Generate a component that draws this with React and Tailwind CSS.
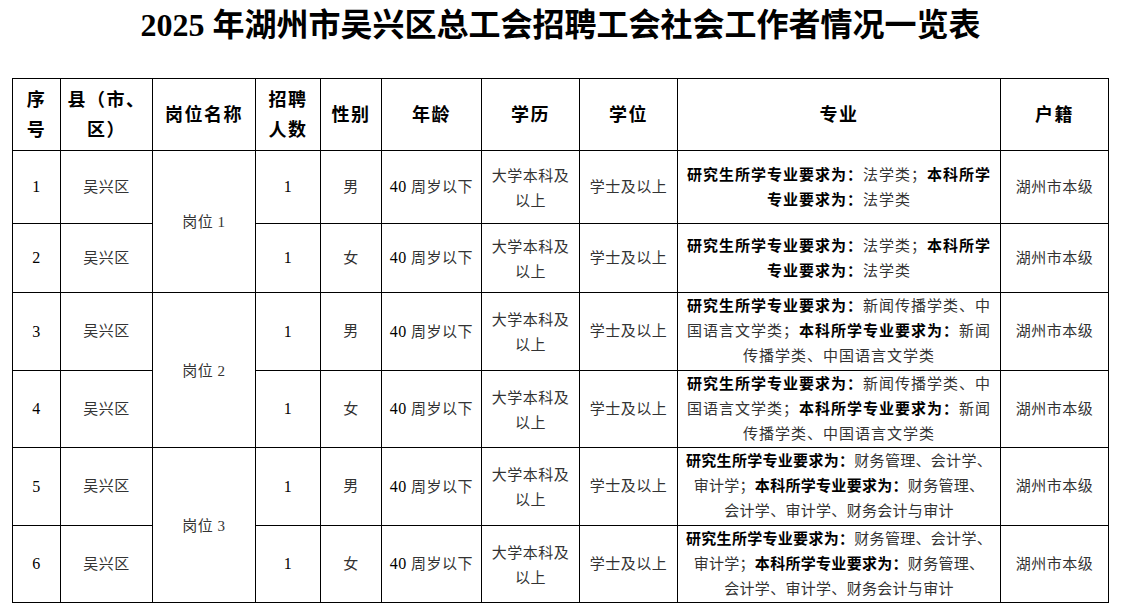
import React from "react";

const FONT = { fontFamily: '"Liberation Serif", "Noto Sans CJK SC", serif' };

const majors = {
  law: (
    <>
      <b className="font-bold text-black">研究生所学专业要求为：</b>法学类；
      <b className="font-bold text-black">本科所学</b>
      <br />
      <b className="font-bold text-black">专业要求为：</b>法学类
    </>
  ),
  news: (
    <>
      <b className="font-bold text-black">研究生所学专业要求为：</b>新闻传播学类、中
      <br />
      国语言文学类；<b className="font-bold text-black">本科所学专业要求为：</b>新闻
      <br />
      传播学类、中国语言文学类
    </>
  ),
  finance: (
    <>
      <b className="font-bold text-black">研究生所学专业要求为：</b>财务管理、会计学、
      <br />
      审计学；<b className="font-bold text-black">本科所学专业要求为：</b>财务管理、
      <br />
      会计学、审计学、财务会计与审计
    </>
  ),
};

const rows = [
  { id: 1, sex: "男", post: "岗位 1", span: 2, major: "law", h: "h-[73px]" },
  { id: 2, sex: "女", major: "law", h: "h-[69px]" },
  { id: 3, sex: "男", post: "岗位 2", span: 2, major: "news", h: "h-[78px]" },
  { id: 4, sex: "女", major: "news", h: "h-[77px]" },
  { id: 5, sex: "男", post: "岗位 3", span: 2, major: "finance", h: "h-[78px]" },
  { id: 6, sex: "女", major: "finance", h: "h-[77px]" },
];

const widths = [48, 92, 103, 65, 61, 100, 98, 98, 323, 108];

export default function App() {
  return (
    <div className="w-[1121px] h-[613px] bg-white overflow-hidden" style={FONT}>
      <div className="h-[78px] pt-[6px] text-center">
        <h1 className="text-[32px] leading-[38px] font-bold text-black">
          2025 年湖州市吴兴区总工会招聘工会社会工作者情况一览表
        </h1>
      </div>

      <table className="ml-[12px] w-[1096px] table-fixed border-collapse text-center">
        <colgroup>
          {widths.map((w, i) => (
            <col key={i} style={{ width: w }} />
          ))}
        </colgroup>
        <thead>
          <tr className="h-[72px] text-[18px] leading-[30px] font-bold text-black tracking-[1.5px]">
            <th className="border border-black font-bold">序<br />号</th>
            <th className="border border-black font-bold">县（市、<br />区）</th>
            <th className="border border-black font-bold">岗位名称</th>
            <th className="border border-black font-bold">招聘<br />人数</th>
            <th className="border border-black font-bold">性别</th>
            <th className="border border-black font-bold">年龄</th>
            <th className="border border-black font-bold">学历</th>
            <th className="border border-black font-bold">学位</th>
            <th className="border border-black font-bold">专业</th>
            <th className="border border-black font-bold">户籍</th>
          </tr>
        </thead>
        <tbody className="text-[15px] text-[#333] tracking-[0.5px]">
          {rows.map((r) => (
            <tr key={r.id} className={r.h}>
              <td className="border border-black text-black text-[16px]">{r.id}</td>
              <td className="border border-black">吴兴区</td>
              {r.post && (
                <td rowSpan={r.span} className="border border-black pt-[2px]">
                  {r.post}
                </td>
              )}
              <td className="border border-black text-black text-[16px]">1</td>
              <td className="border border-black">{r.sex}</td>
              <td className="border border-black whitespace-nowrap">
                <span className="text-black text-[16px]">40</span> 周岁以下
              </td>
              <td className="border border-black leading-[25px] pt-[3px]">
                大学本科及
                <br />
                以上
              </td>
              <td className="border border-black">学士及以上</td>
              <td
                className={
                  r.major === "finance"
                    ? "border border-black leading-[25px] tracking-[0.3px] whitespace-nowrap"
                    : r.major === "news"
                    ? "border border-black leading-[25px] tracking-[1px] whitespace-nowrap"
                    : "border border-black leading-[25px] tracking-[1px] whitespace-nowrap pt-[2px]"
                }
              >
                {majors[r.major]}
              </td>
              <td className="border border-black">湖州市本级</td>
            </tr>
          ))}
        </tbody>
      </table>
    </div>
  );
}
